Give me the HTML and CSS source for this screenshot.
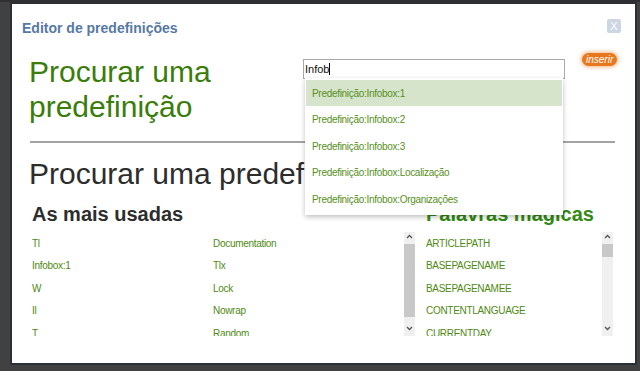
FILE: index.html
```html
<!DOCTYPE html>
<html lang="pt">
<head>
  <meta charset="UTF-8">
  <meta name="viewport" content="width=device-width, initial-scale=1.0">
  <title>Editor de predefinições</title>
  <link rel="stylesheet" href="styles.css">
</head>
<body>
  <div class="backdrop-bar"></div>

  <div class="dialog">
    <div class="dialog-title">Editor de predefinições</div>
    <a class="close-btn" href="#">X</a>

    <div class="dialog-body">
      <div class="search-row">
        <h1 class="search-title">Procurar uma predefinição</h1>
        <div class="search-field">
          <div class="search-box">Infob<span class="caret"></span></div>
          <ul class="suggestions">
            <li class="active">Predefinição:Infobox:1</li>
            <li>Predefinição:Infobox:2</li>
            <li>Predefinição:Infobox:3</li>
            <li>Predefinição:Infobox:Localização</li>
            <li>Predefinição:Infobox:Organizações</li>
          </ul>
        </div>
        <span class="insert-btn">inserir</span>
      </div>

      <hr class="divider">

      <h1 class="section-title">Procurar uma predefinição</h1>

      <div class="lists">
        <div class="list-col list-col-wide">
          <h2 class="list-title">As mais usadas</h2>
          <div class="list-box">
            <ul class="items items-two">
              <li>Tl</li><li>Documentation</li>
              <li>Infobox:1</li><li>Tlx</li>
              <li>W</li><li>Lock</li>
              <li>Il</li><li>Nowrap</li>
              <li>T</li><li>Random</li>
            </ul>
            <div class="scrollbar">
              <svg class="arrow" width="11" height="9" viewBox="0 0 11 9"><polyline points="3,6 5.5,3.5 8,6" fill="none" stroke="#555" stroke-width="1.3"/></svg>
              <div class="thumb thumb-long"></div>
              <svg class="arrow arrow-down" width="11" height="10" viewBox="0 0 11 10"><polyline points="3,4 5.5,6.5 8,4" fill="none" stroke="#555" stroke-width="1.3"/></svg>
            </div>
          </div>
        </div>

        <div class="list-col list-col-narrow">
          <h2 class="list-title magic">Palavras mágicas</h2>
          <div class="list-box">
            <ul class="items">
              <li>ARTICLEPATH</li>
              <li>BASEPAGENAME</li>
              <li>BASEPAGENAMEE</li>
              <li>CONTENTLANGUAGE</li>
              <li>CURRENTDAY</li>
            </ul>
            <div class="scrollbar">
              <svg class="arrow" width="11" height="9" viewBox="0 0 11 9"><polyline points="3,6 5.5,3.5 8,6" fill="none" stroke="#555" stroke-width="1.3"/></svg>
              <div class="thumb thumb-short"></div>
              <svg class="arrow arrow-down" width="11" height="10" viewBox="0 0 11 10"><polyline points="3,4 5.5,6.5 8,4" fill="none" stroke="#555" stroke-width="1.3"/></svg>
            </div>
          </div>
        </div>
      </div>
    </div>
  </div>
</body>
</html>
```

FILE: styles.css
```css
body {
  margin: 0;
  padding: 0;
  background: #414141;
  font-family: "Liberation Sans", Arial, sans-serif;
  overflow: hidden;
}
.backdrop-bar {
  height: 2px;
  background: #2f2f2f;
}
.dialog {
  position: relative;
  margin-left: 10px;
  width: 623px;
  height: 359px;
  background: white;
  border: 2px solid #2b3038;
}
.dialog-title {
  padding: 16px 0 0 10px;
  font-size: 14px;
  line-height: 16px;
  font-weight: bold;
  color: #5679a4;
}
.close-btn {
  position: absolute;
  top: 15px;
  right: 14px;
  width: 14px;
  height: 14px;
  background: #cdd7e3;
  border-radius: 2px;
  color: white;
  font-size: 11px;
  line-height: 14px;
  text-align: center;
  text-decoration: none;
}
.dialog-body {
  padding-left: 17px;
}
.search-row {
  display: flex;
  align-items: flex-start;
  margin-top: 18px;
}
.search-title {
  width: 274px;
  margin: 0;
  font-size: 30px;
  line-height: 35px;
  font-weight: normal;
  color: #3a7d0a;
}
.search-field {
  position: relative;
  width: 262px;
  margin-top: 5px;
}
.search-box {
  height: 18px;
  border: 1px solid #a9a9a9;
  padding-left: 1px;
  font-size: 11px;
  line-height: 18px;
  color: #111;
}
.caret {
  display: inline-block;
  width: 1px;
  height: 12px;
  background: #000;
  vertical-align: -2px;
}
.suggestions {
  position: absolute;
  top: 19px;
  left: 2px;
  width: 258px;
  height: 135px;
  margin: 0;
  padding: 2px 0 0 0;
  list-style: none;
  background: white;
  box-shadow: 0 2px 5px rgba(0,0,0,0.25);
  z-index: 2;
}
.suggestions li {
  height: 26.4px;
  line-height: 27px;
  margin: 0 1px;
  padding-left: 6px;
  font-size: 10px;
  letter-spacing: -0.3px;
  color: #578f1a;
}
.suggestions li.active {
  background: #d5e4cb;
}
.insert-btn {
  margin: -1px 0 0 17px;
  padding: 0 4px;
  height: 13px;
  line-height: 13px;
  border-radius: 7px;
  background: #e8781e;
  box-shadow: 0 0 4px 1px rgba(232,120,30,0.55);
  color: white;
  font-size: 10px;
  font-style: italic;
}
.divider {
  width: 585px;
  margin: 17px 0 0 1px;
  border: none;
  border-top: 2px solid #a3a3a3;
}
.section-title {
  margin: 13px 0 0 0;
  font-size: 30px;
  line-height: 35px;
  font-weight: normal;
  color: #2d2d2d;
  white-space: nowrap;
}
.lists {
  display: flex;
  gap: 11px;
  margin-top: 12px;
  padding-left: 3px;
}
.list-col-wide {
  width: 383px;
}
.list-col-narrow {
  width: 187px;
}
.list-title {
  margin: 0;
  font-size: 20px;
  line-height: 23px;
  font-weight: bold;
  color: #2d2d2d;
  white-space: nowrap;
}
.list-title.magic {
  color: #338a12;
}
.list-box {
  display: flex;
  height: 104px;
  margin-top: 6px;
  overflow: hidden;
}
.items {
  flex: 1;
  margin: 0;
  padding: 0;
  list-style: none;
}
.items-two {
  display: grid;
  grid-template-columns: 181px 1fr;
  align-content: start;
}
.items li {
  height: 22.4px;
  line-height: 23px;
  font-size: 10px;
  letter-spacing: -0.3px;
  color: #4f8a14;
  white-space: nowrap;
}
.scrollbar {
  display: flex;
  flex-direction: column;
  width: 11px;
  height: 104px;
  background: #f0f0f0;
}
.arrow {
  display: block;
  flex: none;
}
.arrow-down {
  margin-top: auto;
  margin-bottom: 3px;
}
.thumb {
  margin-top: 3px;
  background: #c8c8c8;
}
.thumb-long {
  height: 73px;
}
.thumb-short {
  height: 13px;
}
```
